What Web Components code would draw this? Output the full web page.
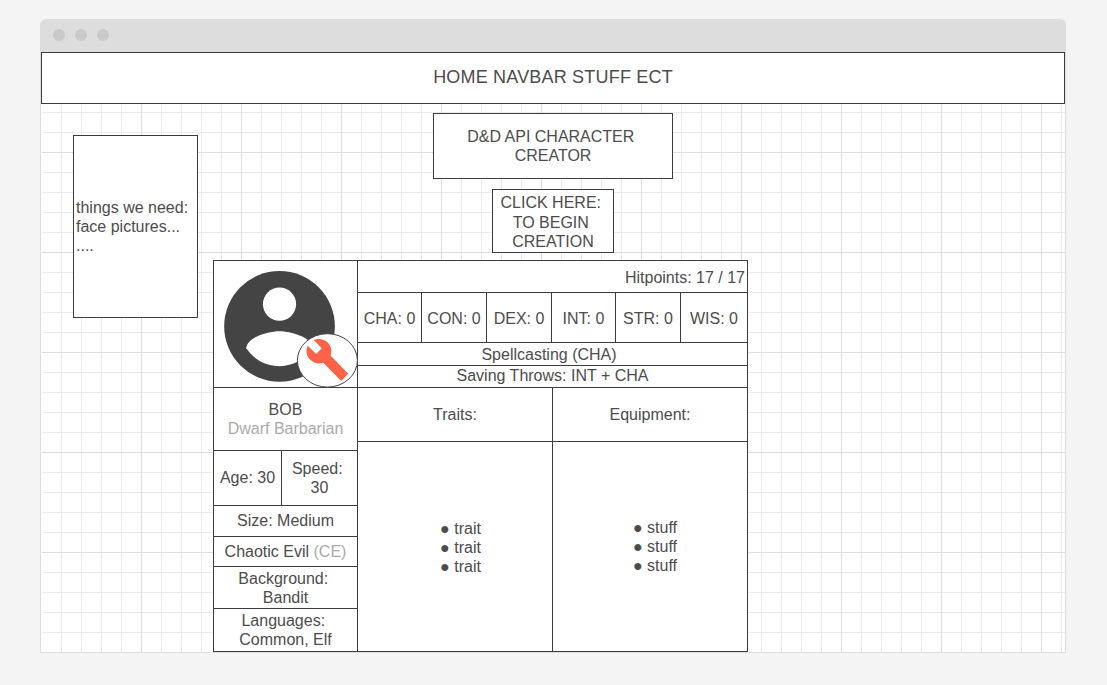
<!DOCTYPE html>
<html lang="en">
<head>
<meta charset="utf-8">
<title>Character creator wireframe</title>
<style>
html, body { margin: 0; height: 100%; background: #f4f4f4; }
body { font: 16px/19px "Liberation Sans", Arial, sans-serif; color: #4c4c4c; --line: #3c3c3c; overflow: hidden; }
</style>
</head>
<body>
<mock-window>
  <nav-strip slot="nav">HOME NAVBAR STUFF ECT</nav-strip>
  <note-box style="left:32px;top:83px;width:125px;height:183px;--align:flex-start"><div>things we need:</div><div>face pictures...</div><div>....</div></note-box>
  <note-box style="left:392px;top:61px;width:240px;height:66px"><div>D&amp;D API CHARACTER </div><div>CREATOR</div></note-box>
  <note-box style="left:451px;top:137px;width:122px;height:64px;line-height:19.5px;--nudge:3px"><div>CLICK HERE: </div><div>TO BEGIN </div><div>CREATION</div></note-box>
  <character-sheet></character-sheet>
</mock-window>
<script>
const define = (name, html) => {
  const template = document.createElement('template');
  template.innerHTML = html;
  customElements.define(name, class extends HTMLElement {
    constructor() {
      super();
      this.attachShadow({ mode: 'open' }).append(template.content.cloneNode(true));
    }
  });
};

define('nav-strip', `<style>
:host { display: flex; align-items: center; justify-content: center; box-sizing: border-box; height: 52px; border: 1px solid var(--line); background: #fff; font-size: 18px; letter-spacing: .19px; padding-bottom: 2px; white-space: pre; }
</style><slot></slot>`);

define('note-box', `<style>
:host { position: absolute; box-sizing: border-box; display: flex; flex-direction: column; justify-content: center; align-items: var(--align, center); padding: var(--nudge, 0) 2px 0; border: 1px solid var(--line); background: #fff; white-space: pre; }
</style><slot></slot>`);

define('sheet-cell', `<style>
:host { box-sizing: border-box; display: flex; flex-direction: column; justify-content: center; align-items: center; min-width: 0; min-height: 0; border: solid var(--line); border-width: 0 1px 1px 0; white-space: pre; padding: var(--pt, 0) var(--pr, 0) var(--pb, 0) var(--pl, 0); }
:host([end]) { align-items: flex-end; --pr: 2px; }
</style><slot></slot>`);

define('profile-picture', `<style>
:host { display: block; box-sizing: border-box; border: solid var(--line); border-width: 0 1px 1px 0; position: relative; }
svg { position: absolute; left: 0; top: 0; width: 146px; height: 128px; overflow: visible; z-index: 1; }
</style>
<svg viewBox="214 261 146 128">
  <g transform="translate(213.1 259.9) scale(5.535)">
    <circle cx="12" cy="12" r="10" fill="#444"/>
    <circle cx="12" cy="8" r="3" fill="#fff"/>
    <path fill="#fff" d="M12 19.2c-2.5 0-4.71-1.28-6-3.22.03-1.99 4-3.08 6-3.08 1.99 0 5.97 1.09 6 3.08-1.29 1.94-3.5 3.22-6 3.22z"/>
  </g>
  <ellipse cx="327.4" cy="360.4" rx="30" ry="26.7" fill="#fff" stroke="#444" stroke-width="1"/>
  <path transform="translate(304.7 336.8) scale(1.9)" fill="#ff6347" d="M22.9 19.5 13.6 9.9c.9-2.3.4-5-1.5-6.9-2-2-5-2.4-7.4-1.3L9 6 6 9 1.6 4.7C.4 7.1.9 10.1 2.9 12.1c1.9 1.9 4.6 2.4 6.9 1.5l9.4 9.6z"/>
</svg>`);

define('character-sheet', `<style>
:host { position: absolute; left: 172px; top: 208px; width: 535px; height: 392px; box-sizing: border-box; border: solid var(--line); border-width: 1px 0 0 1px; background: #fff; display: grid; grid-template-columns: 144px 390px; }
.left { display: grid; grid-template-rows: 127px 63px 55px 31px 30px 42px 43px; }
.right { display: grid; grid-template-rows: 32px 50px 23px 22px 54px 210px; }
.pair { display: grid; grid-template-columns: 68px 76px; }
.stats { display: grid; grid-template-columns: 64px 65px 65px 64px 65px 67px; --pt: 2px; }
.half { display: grid; grid-template-columns: 195px 195px; }
.muted { color: #aaa; }
</style>
<div class="left">
  <profile-picture></profile-picture>
  <sheet-cell><div>BOB</div><div class="muted">Dwarf Barbarian</div></sheet-cell>
  <div class="pair"><sheet-cell style="--pb:1px">Age: 30</sheet-cell><sheet-cell><div>Speed: </div><div>30</div></sheet-cell></div>
  <sheet-cell style="--pb:1px">Size: Medium</sheet-cell>
  <sheet-cell><div>Chaotic Evil <span class="muted">(CE)</span></div></sheet-cell>
  <sheet-cell><div>Background: </div><div>Bandit</div></sheet-cell>
  <sheet-cell><div>Languages: </div><div>Common, Elf</div></sheet-cell>
</div>
<div class="right">
  <sheet-cell end style="--pt:2px">Hitpoints: 17 / 17</sheet-cell>
  <div class="stats"><sheet-cell>CHA: 0</sheet-cell><sheet-cell>CON: 0</sheet-cell><sheet-cell>DEX: 0</sheet-cell><sheet-cell>INT: 0</sheet-cell><sheet-cell>STR: 0</sheet-cell><sheet-cell>WIS: 0</sheet-cell></div>
  <sheet-cell style="--pr:7px">Spellcasting (CHA)</sheet-cell>
  <sheet-cell style="--pb:2px">Saving Throws: INT + CHA</sheet-cell>
  <div class="half"><sheet-cell>Traits:</sheet-cell><sheet-cell>Equipment:</sheet-cell></div>
  <div class="half"><sheet-cell style="--pt:1px;--pl:11px"><div>● trait</div><div>● trait</div><div>● trait</div></sheet-cell><sheet-cell style="--pb:1px;--pl:10px"><div>● stuff</div><div>● stuff</div><div>● stuff</div></sheet-cell></div>
</div>`);

define('mock-window', `<style>
:host { display: flex; flex-direction: column; box-sizing: border-box; width: 1026px; height: 634px; margin: 19px 0 0 40px; }
.bar { flex: none; height: 33px; box-sizing: border-box; padding-left: 13px; border-radius: 6px 6px 0 0; background: #ddd; display: flex; align-items: center; gap: 10px; }
.bar i { width: 12px; height: 12px; border-radius: 50%; background: #c9c9c9; margin-top: -1px; }
.body { flex: 1; box-sizing: border-box; position: relative; border: solid #dedede; border-width: 0 1px 1px; background-color: #fff;
  background-image: linear-gradient(#fff, #fff), linear-gradient(90deg, #dedede 1px, transparent 1px), linear-gradient(#dedede 1px, transparent 1px), linear-gradient(90deg, #ebebeb 1px, transparent 1px), linear-gradient(#ebebeb 1px, transparent 1px);
  background-size: 1px 100%, 100px 100px, 100px 100px, 20px 20px, 20px 20px;
  background-repeat: no-repeat, repeat, repeat, repeat, repeat; }
</style>
<div class="bar"><i></i><i></i><i></i></div>
<div class="body"><slot name="nav"></slot><slot></slot></div>`);
</script>
</body>
</html>
